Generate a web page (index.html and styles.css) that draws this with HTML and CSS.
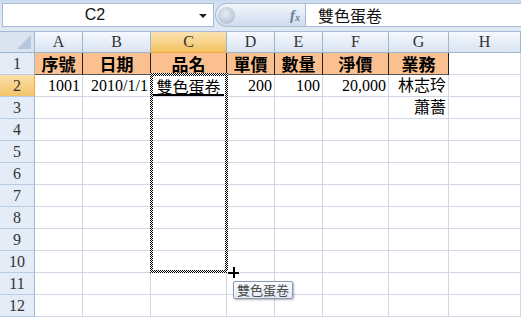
FILE: index.html
```html
<!DOCTYPE html>
<html lang="zh-Hant">
<head>
    <meta charset="UTF-8">
    <title>雙色蛋卷</title>
    <link rel="stylesheet" href="styles.css">
</head>
<body>
    <div class="sheet">
        <div class="toolbar">
            <div class="namebox">
                <span class="namebox-text">C2</span>
                <span class="namebox-arrow"></span>
            </div>
            <div class="pill">
                <span class="pill-knob"></span>
                <span class="fx">f<sub>x</sub></span>
            </div>
            <div class="formula">雙色蛋卷</div>
        </div>

        <div class="grid">
            <!-- column headers -->
            <div class="corner"><span class="corner-tri"></span></div>
            <div class="colhead">A</div>
            <div class="colhead">B</div>
            <div class="colhead colhead-sel">C</div>
            <div class="colhead">D</div>
            <div class="colhead">E</div>
            <div class="colhead">F</div>
            <div class="colhead">G</div>
            <div class="colhead">H</div>

            <!-- row 1 -->
            <div class="rowhead">1</div>
            <div class="cell title">序號</div>
            <div class="cell title">日期</div>
            <div class="cell title">品名</div>
            <div class="cell title">單價</div>
            <div class="cell title">數量</div>
            <div class="cell title">淨價</div>
            <div class="cell title">業務</div>
            <div class="cell"></div>

            <!-- row 2 -->
            <div class="rowhead rowhead-sel">2</div>
            <div class="cell num">1001</div>
            <div class="cell num">2010/1/1</div>
            <div class="cell center">雙色蛋卷</div>
            <div class="cell num">200</div>
            <div class="cell num">100</div>
            <div class="cell num">20,000</div>
            <div class="cell num">林志玲</div>
            <div class="cell"></div>

            <!-- row 3 -->
            <div class="rowhead">3</div>
            <div class="cell"></div>
            <div class="cell"></div>
            <div class="cell"></div>
            <div class="cell"></div>
            <div class="cell"></div>
            <div class="cell"></div>
            <div class="cell num">蕭薔</div>
            <div class="cell"></div>

            <div class="rowhead">4</div>
            <div class="cell"></div><div class="cell"></div><div class="cell"></div><div class="cell"></div>
            <div class="cell"></div><div class="cell"></div><div class="cell"></div><div class="cell"></div>

            <div class="rowhead">5</div>
            <div class="cell"></div><div class="cell"></div><div class="cell"></div><div class="cell"></div>
            <div class="cell"></div><div class="cell"></div><div class="cell"></div><div class="cell"></div>

            <div class="rowhead">6</div>
            <div class="cell"></div><div class="cell"></div><div class="cell"></div><div class="cell"></div>
            <div class="cell"></div><div class="cell"></div><div class="cell"></div><div class="cell"></div>

            <div class="rowhead">7</div>
            <div class="cell"></div><div class="cell"></div><div class="cell"></div><div class="cell"></div>
            <div class="cell"></div><div class="cell"></div><div class="cell"></div><div class="cell"></div>

            <div class="rowhead">8</div>
            <div class="cell"></div><div class="cell"></div><div class="cell"></div><div class="cell"></div>
            <div class="cell"></div><div class="cell"></div><div class="cell"></div><div class="cell"></div>

            <div class="rowhead">9</div>
            <div class="cell"></div><div class="cell"></div><div class="cell"></div><div class="cell"></div>
            <div class="cell"></div><div class="cell"></div><div class="cell"></div><div class="cell"></div>

            <div class="rowhead">10</div>
            <div class="cell"></div><div class="cell"></div><div class="cell"></div><div class="cell"></div>
            <div class="cell"></div><div class="cell"></div><div class="cell"></div><div class="cell"></div>

            <div class="rowhead">11</div>
            <div class="cell"></div><div class="cell"></div><div class="cell"></div><div class="cell"></div>
            <div class="cell"></div><div class="cell"></div><div class="cell"></div><div class="cell"></div>

            <div class="rowhead">12</div>
            <div class="cell"></div><div class="cell"></div><div class="cell"></div><div class="cell"></div>
            <div class="cell"></div><div class="cell"></div><div class="cell"></div><div class="cell"></div>
        </div>

        <!-- overlays: active cell, copy marquee, cursor, tooltip -->
        <div class="active-line"></div>
        <div class="fill-handle"></div>
        <div class="marquee"></div>
        <svg class="cursor" width="13" height="13" viewBox="0 0 13 13">
            <rect x="5" y="0" width="3" height="13" fill="#fff"/>
            <rect x="0" y="5" width="13" height="3" fill="#fff"/>
            <rect x="6" y="1" width="2" height="11" fill="#000"/>
            <rect x="1" y="6" width="11" height="2" fill="#000"/>
        </svg>
        <div class="tip">雙色蛋卷</div>
    </div>
</body>
</html>
```

FILE: styles.css
```css
body {
    margin: 0;
    background: #fff;
    font-family: "Liberation Serif", "Noto Sans CJK TC", serif;
    overflow: hidden;
}

.sheet {
    position: relative;
    width: 521px;
    height: 317px;
    overflow: hidden;
}

/* ---- formula bar ---- */
.toolbar {
    height: 31px;
    box-sizing: border-box;
    padding: 3px 0 4px 2px;
    background: linear-gradient(#c9d9ee, #dbe6f4 20%, #dfe8f5);
    display: flex;
    align-items: stretch;
}

.namebox {
    width: 212px;
    box-sizing: border-box;
    background: #fff;
    border: 1px solid #a7bad4;
    display: flex;
    align-items: center;
    position: relative;
}

.namebox-text {
    flex: 1;
    text-align: center;
    font-family: "Liberation Sans", "Noto Sans CJK TC", sans-serif;
    font-size: 16px;
    color: #111;
    padding-right: 12px;
}

.namebox-arrow {
    width: 0;
    height: 0;
    border-left: 4px solid transparent;
    border-right: 4px solid transparent;
    border-top: 4px solid #222;
    margin-right: 6px;
    margin-top: 1px;
}

.pill {
    width: 90px;
    margin-left: 1px;
    box-sizing: border-box;
    border-radius: 12px 0 0 12px;
    border: 1px solid #a9bcd6;
    border-right: none;
    background: linear-gradient(#f3f7fc, #dde7f4 55%, #cfdcee);
    display: flex;
    align-items: center;
    justify-content: space-between;
}

.pill-knob {
    width: 17px;
    height: 17px;
    margin-left: 2px;
    border-radius: 50%;
    background: radial-gradient(circle at 45% 40%, #e9eef5, #b9c6d6 70%, #a3b2c6);
}

.fx {
    font-family: "Liberation Serif", serif;
    font-style: italic;
    font-weight: 700;
    font-size: 15px;
    color: #6b7c93;
    margin-right: 5px;
}

.fx sub {
    font-size: 10px;
    vertical-align: -1px;
}

.formula {
    flex: 1;
    background: #fff;
    border: 1px solid #a7bad4;
    border-right: none;
    padding-left: 12px;
    font-family: "Noto Sans CJK TC", sans-serif;
    font-size: 16px;
    line-height: 22px;
    color: #111;
}

/* ---- grid ---- */
.grid {
    display: grid;
    grid-template-columns: 35px 48px 68px 76px 48px 48px 66px 60px 1fr;
    grid-template-rows: 22px;
    grid-auto-rows: 22px;
}

.grid > div {
    box-sizing: border-box;
}

.corner,
.colhead {
    border-top: 1px solid #a7bad4;
    border-right: 1px solid #9eb6ce;
    border-bottom: 1px solid #9eb6ce;
    background: linear-gradient(#f6f9fd, #e4ecf7 60%, #dae4f1);
}

.corner {
    position: relative;
    background: #dae4f1;
}

.corner-tri {
    position: absolute;
    right: 3px;
    bottom: 3px;
    width: 0;
    height: 0;
    border-left: 14px solid transparent;
    border-bottom: 14px solid #b6c8de;
}

.colhead {
    text-align: center;
    font-size: 16px;
    line-height: 20px;
    color: #333;
}

.colhead-sel {
    background: linear-gradient(#fbe3b3, #f6cf82 60%, #f1c15f);
    border-bottom-color: #f2a93a;
}

.rowhead {
    background: #e4ecf7;
    border-right: 1px solid #9eb6ce;
    border-bottom: 1px solid #b8cbe0;
    text-align: center;
    font-size: 16px;
    line-height: 22px;
    color: #333;
}

.rowhead-sel {
    background: linear-gradient(#fbe0a9, #f6cf82 60%, #f2c46a);
    border-right-color: #f2a93a;
}

.cell {
    border-right: 1px solid #d0d7e5;
    border-bottom: 1px solid #d0d7e5;
    font-size: 16px;
    line-height: 22px;
    color: #000;
    white-space: nowrap;
    font-family: "Liberation Serif", "Noto Sans CJK TC", serif;
}

.cell.title {
    background: #fac090;
    border-right: 1px solid #222;
    border-bottom: 1px solid #555;
    font-family: "Noto Sans CJK TC", sans-serif;
    font-weight: 700;
    font-size: 17px;
    text-align: center;
    line-height: 21px;
}

.cell.num {
    text-align: right;
    padding-right: 2px;
}

.cell.center {
    text-align: center;
    font-family: "Noto Sans CJK TC", sans-serif;
}

/* ---- overlays ---- */
.active-line {
    position: absolute;
    left: 151px;
    top: 94px;
    width: 74px;
    height: 2px;
    background: #000;
}

.fill-handle {
    position: absolute;
    left: 224px;
    top: 92px;
    width: 5px;
    height: 5px;
    background: #000;
    border: 1px solid #fff;
    box-sizing: border-box;
}

.marquee {
    position: absolute;
    left: 150px;
    top: 73px;
    width: 78px;
    height: 200px;
    box-sizing: border-box;
    padding: 3px;
    background: conic-gradient(#000 25%, #fff 0 50%, #000 0 75%, #fff 0) 0 0 / 2px 2px;
    -webkit-mask: linear-gradient(#000 0 0) content-box, linear-gradient(#000 0 0);
    -webkit-mask-composite: xor;
    mask-composite: exclude;
}

.cursor {
    position: absolute;
    left: 227px;
    top: 266px;
}

.tip {
    position: absolute;
    left: 233px;
    top: 281px;
    height: 18px;
    padding: 0 3px;
    box-sizing: border-box;
    border: 1px solid #8a99b0;
    border-radius: 2px;
    background: linear-gradient(#fbfcfe, #e4ebf5);
    box-shadow: 1px 1px 2px rgba(0, 0, 0, 0.3);
    font-family: "Noto Sans CJK TC", sans-serif;
    font-size: 13px;
    line-height: 16px;
    color: #4c4c4c;
}
```
